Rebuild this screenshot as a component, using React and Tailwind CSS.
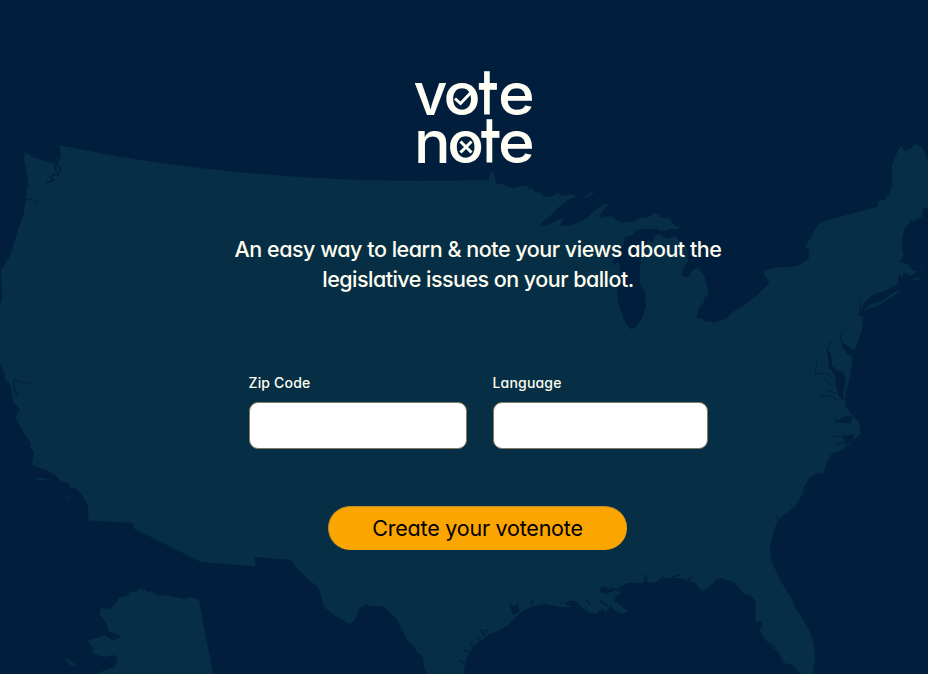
const SEA = "#011f3c";
const LAND = "#062f45";

function MapBackground() {
  return (
    <svg aria-hidden="true" className="absolute inset-0" width="928" height="674" viewBox="0 0 928 674">
      <g fill={LAND}>
        <path d="M58 145L110 155L160 163L200 168L240 172.500L300 177L360 180L420 181L489 180L490 172L494 173L496 184L502 184L508 187L515 188L521 186L527 186L530 189L533 188L535 192L541 193L543 196L551 197L557 193L565 196L571 194L577 196L568 200L560 206L550 216L541 223L541 226L550 224L560 219L564 218L559 226L571 225L580 222L588 217L594 211L600 207L604 204L609 204L603 210L599 218L606 217L611 216L618 221L622 223L626 222L633 222L640 218L649 217L654 213L659 214L660 217L665 218L668 217L673 223L675 226L681 227L676 228L670 228L668 230L660 231L657 229L645 229L637 230L631 236L625 237L624 244L620 250L613 262L612 266L618 262L620 265L619 280L617 293L619 305L624 320L630 329L635 328L642 319L646 305L645 293L640 283L640 270L641 258L645 248L648 240L653 243L654 237L658 234L662 236L667 239L675 236L679 241L687 247L688 262L685 266L682 272L682 276L688 277L693 270L698 267L704 275L708 290L708 297L705 296L703 304L699 308L696 318L703 319L706 322L709 321L714 323L718 321L726 319L731 313L740 308L755 297L768 284L769 281L764 275L764 272L769 269L780 267L790 267L797 266L800 265L809 258L809 250L805 246L808 242L811 238L813 232L818 225L824 221L877 207L878 201L885 200L887 195L889 196L892 184L892 165L899 148L902 146L904 151L909 150L915 144L922 147L928 160L930 170V208L925 208L924 206L922 217L916 219L914 222L911 220L907 226L904 230L902 240L902 249L904 254L900 262L908 264L914 271L921 271L922 264L923 270L916 272L910 276L904 273L902 278L899 274L898 284L885 291L874 294L864 303L861 312L858 302L860 311L858 316L863 316L862 330L856 347L853 352L852 363L848 385L845 393L846 407L852 415L859 422L861 434L852 441L845 448L840 451L834 453L828 460L823 474L818 473L810 477L804 487L803 494L798 501L795 507L785 514L778 520L774 530L771 543L770 548L771 560L780 580L793 601L800 615L810 632L814 645L815 660L813 674H800L793 665L784 663L778 652L770 645L762 635L756 622L755 615L756 602L750 595L744 594L735 583L722 578L716 580L710 586L702 591L695 583L680 578L665 578L658 581L652 583L646 582L645 574L644 583L628 583L618 588L622 592L615 597L614 601L620 605L628 611L623 614L616 611L610 606L606 612L602 609L596 614L590 613L583 608L575 602L568 602L565 604L573 607L560 607L545 604L530 607L520 613L508 625L500 630L490 634L475 645L467 657L465 666L463 674H427L424 668L423 657L417 652L413 645L407 640L400 625L396 618L384 607L377 606L370 606L367 604L360 608L355 620L350 624L343 620L335 616L324 607L321 595L317 586L310 581L295 566L291 560L255 557V566.500L201 562L133 528L134 523L89 520.500L88 515L88 505L82 495L75 488L70 489L69 483L62 482L55 475L47 470L35 467L32 464L34 452L30 448L31 444L24 433L16 419L17 413L20 410L13 402L12 392L11 386L5 379L5 374L0 364V304L2 300L1 270L10 256L18 230L24 213L27 190L28 180L24 160L25 152L35 158L50 162L58 163L55 156L51 153L60 152Z"/>
        <path d="M213 674L199 600L190 597L183 599L175 597L165 595L160 596L155 594L152 591L148 592L144 589L142 590L140 587L137 591L130 592L127 596L120 597L113 606L109 609L101 608L99 614L107 624L108 631L116 634L122 637L112 640L105 635L96 638L87 641L93 647L92 653L97 655L105 657L114 655L118 658L115 667L105 670L97 674ZM64 658L70 660L77 666L70 665ZM35 478L43 478L50 480L38 480ZM45 496L49 498L46 497ZM65 496L70 499L67 499ZM63 505L67 511L64 508Z"/>
        <path d="M584 197L590 193L596 190L591 195L585 198ZM670 227L682 227L676 229L668 229ZM861 313L869 305L883 300L893 293L901 290L892 297L878 306L868 309ZM911 280L918 277L920 280ZM923 280L926 279L925 281Z"/>
      </g>
      <g fill="none" stroke={SEA} strokeWidth="1" strokeLinejoin="bevel">
        <path strokeWidth="1.5" d="M59 146L60 157L54 164L57 173L50 177L54 180L46 183M60 155L57 165L61 170L57 177M14 381L15 392L18 395"/>
        <path d="M27 185L31 184M26 200L32 199L38 203M14 382L14 379L20 382L30 383M843 330L840 339L844 345L851 352M830 343L827 350L830 360L829 369M831 341L833 345M817 362L815 373L827 374L833 378L842 382M822 378L834 387M827 390L838 394L843 400M820 396L831 396L838 401M835 416L836 423L846 418M849 415L850 426M832 436L843 437M835 445L846 441L843 434M830 453L831 457M790 504L794 507M776 514L779 520L785 514M860 298L861 310"/>
        <path strokeWidth="1.5" d="M591 605L586 600M600 601L608 606M611 588L620 591M645 574L647 584M659 582L664 575M671 577L681 575M687 580L692 578M510 604L517 613M513 608L518 605M531 604L534 599M566 603L577 602M480 629L485 636M484 631L488 630M477 637L481 642M470 644L474 648M464 650L470 653M459 660L465 664M770 643L777 648M793 600L797 610"/>
      </g>
      <g fill={SEA}>
        <path d="M827 348L831 355L832 366L837 370L843 372L846 381L843 394L845 401L840 397L835 384L836 377L829 367ZM841 343L846 345L853 350L853 357L846 353ZM836 421L846 416L853 418L850 422L842 423ZM842 436L855 434L852 441L844 445L845 440ZM600 588L604 586L609 589L615 590L606 594L600 592ZM510 606L513 608L517 604L520 611L513 615ZM567 602L572 600L578 603L572 606ZM755 622L763 621L761 628L756 627ZM51 152L58 150L60 158L55 157Z"/>
      </g>
    </svg>
  );
}

function Logo() {
  return (
    <svg role="img" aria-label="vote note" className="block overflow-visible font-['Inter',sans-serif] font-medium" width="128" height="100" viewBox="410 66 128 100">
      <defs>
        <clipPath id="stemTop"><path d="M476 66H506V114.500H476Z"/></clipPath>
        <clipPath id="stemBottom"><path d="M476 114H506V162.500H476Z"/></clipPath>
      </defs>
      <g fill="#fffef5" fontSize="58">
        <text transform="translate(413.500 114.500) scale(1.020 1)">v</text>
        <text transform="translate(443.400 114.500) scale(1.060 1)">o</text>
        <g clipPath="url(#stemTop)" className="font-normal"><text transform="translate(478.200 132.200) scale(1.100 1.550)">t</text></g>
        <text transform="translate(498 114.500) scale(1.080 1)">e</text>
        <text transform="translate(414 162.500) scale(1.050 1)">n</text>
        <text transform="translate(447.300 162.500) scale(1.050 1)">o</text>
        <g clipPath="url(#stemBottom)" className="font-normal"><text transform="translate(480.700 180.200) scale(1.100 1.550)">t</text></g>
        <text transform="translate(498 162.500) scale(1.080 1)">e</text>
      </g>
      <g fill="none" stroke="#fffef5" strokeWidth="3">
        <path d="M455 98.500L460.500 103.500L470.500 93"/>
        <path d="M460.500 141.500L471.500 152.500M471.500 141.500L460.500 152.500"/>
      </g>
    </svg>
  );
}

function Field({ id, label, box }) {
  return (
    <div className="flex flex-col">
      <label htmlFor={id} className="h-5 text-[14px] leading-5 font-medium tracking-[0.18px] text-[#fffef0]">{label}</label>
      <input id={id} className={`mt-[9px] h-[47px] rounded-[9px] border border-[#827b63] bg-white px-3 text-black outline-none ${box}`} />
    </div>
  );
}

export default function App() {
  return (
    <main className="relative h-[674px] w-[928px] overflow-hidden bg-[#011f3c] font-['Inter',sans-serif] [font-feature-settings:'cv11']">
      <MapBackground />
      <div className="relative flex flex-col items-center pt-[66px] pl-7">
        <div className="mr-2"><Logo /></div>
        <h1 className="mt-[68px] text-center text-[21.5px] leading-[30px] font-medium text-[#fffef0]">
          <span className="block whitespace-nowrap tracking-[-0.47px]">An easy way to learn &amp; note your views about the</span>
          <span className="block whitespace-nowrap tracking-[-0.53px]">legislative issues on your ballot.</span>
        </h1>
        <form className="flex flex-col items-center" onSubmit={(e) => e.preventDefault()}>
          <div className="mt-[79px] flex gap-[26px]">
            <Field id="zip" label="Zip Code" box="w-[218px]" />
            <Field id="language" label="Language" box="w-[215px]" />
          </div>
          <button className="mt-[57px] mr-[2px] h-[44px] w-[299px] rounded-full border-t border-l border-[#b98b2c] bg-[#faa500] text-[21.5px] tracking-[-0.22px] text-black">Create your votenote</button>
        </form>
      </div>
    </main>
  );
}
